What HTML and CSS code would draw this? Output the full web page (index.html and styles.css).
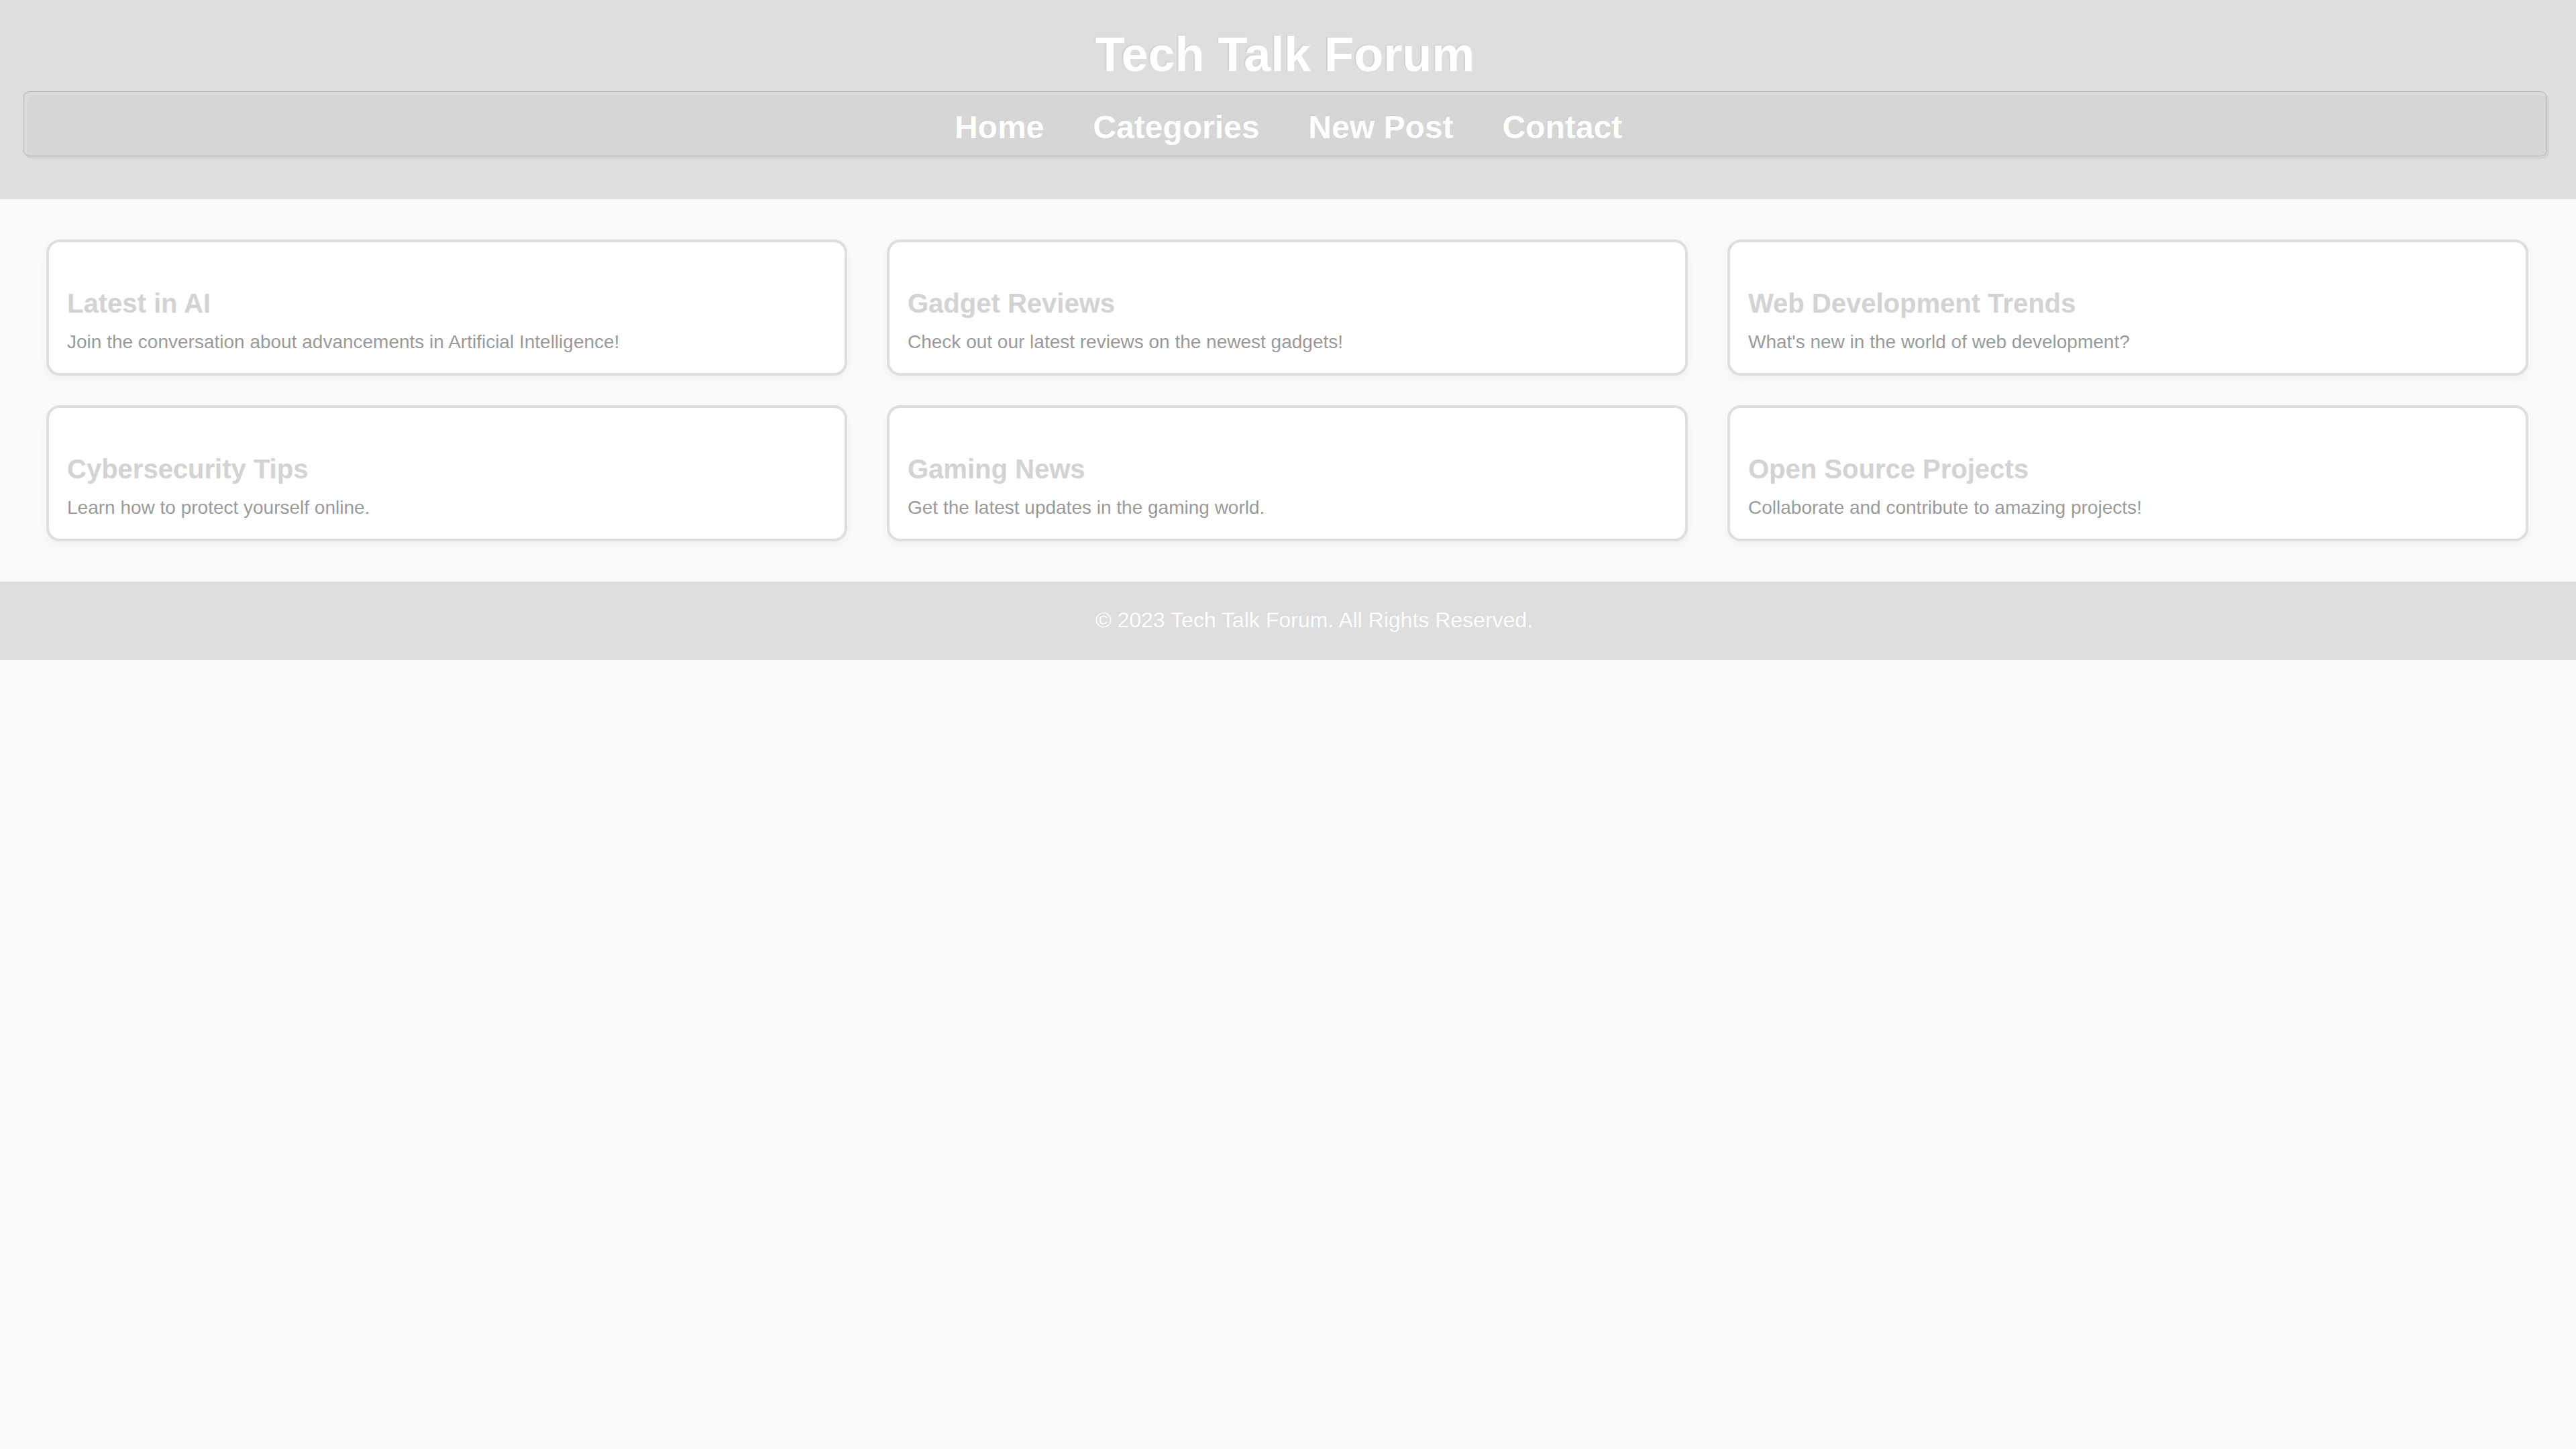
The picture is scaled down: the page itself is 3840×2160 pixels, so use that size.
FILE: index.html
```html
<!DOCTYPE html>
<html lang="en">
<head>
<meta charset="utf-8">
<title>Tech Talk Forum</title>
<link rel="stylesheet" href="styles.css">
</head>
<body>
<header class="site-header">
  <h1 class="site-title">Tech Talk Forum</h1>
  <nav class="main-nav">
    <a class="nav-link" href="#">Home</a>
    <a class="nav-link" href="#">Categories</a>
    <a class="nav-link" href="#">New Post</a>
    <a class="nav-link" href="#">Contact</a>
  </nav>
</header>
<main class="topics">
  <section class="topic-card">
    <h2 class="topic-title">Latest in AI</h2>
    <p class="topic-desc">Join the conversation about advancements in Artificial Intelligence!</p>
  </section>
  <section class="topic-card">
    <h2 class="topic-title">Gadget Reviews</h2>
    <p class="topic-desc">Check out our latest reviews on the newest gadgets!</p>
  </section>
  <section class="topic-card">
    <h2 class="topic-title">Web Development Trends</h2>
    <p class="topic-desc">What's new in the world of web development?</p>
  </section>
  <section class="topic-card">
    <h2 class="topic-title">Cybersecurity Tips</h2>
    <p class="topic-desc">Learn how to protect yourself online.</p>
  </section>
  <section class="topic-card">
    <h2 class="topic-title">Gaming News</h2>
    <p class="topic-desc">Get the latest updates in the gaming world.</p>
  </section>
  <section class="topic-card">
    <h2 class="topic-title">Open Source Projects</h2>
    <p class="topic-desc">Collaborate and contribute to amazing projects!</p>
  </section>
</main>
<footer class="site-footer">
  <p class="footer-text">&copy; 2023 Tech Talk Forum. All Rights Reserved.</p>
</footer>
</body>
</html>
```
FILE: styles.css
```css
html, body {
  margin: 0;
  padding: 0;
}

body {
  background: #fafafa;
  font-family: "Liberation Sans", Arial, sans-serif;
  min-height: 2160px;
}

.site-header {
  background: #dedede;
  padding: 40px 43px 64px 34px;
  display: flex;
  flex-direction: column;
}

.site-title {
  margin: 0 0 13px 0;
  font-size: 72px;
  font-weight: bold;
  line-height: 83px;
  color: #ffffff;
  text-align: center;
  text-shadow: -2px -1px 0 rgba(0, 0, 0, 0.06);
}

.main-nav {
  display: flex;
  justify-content: center;
  gap: 73px;
  padding: 25px 0 15px 10px;
  background: #d6d6d6;
  border: 1px solid #b4b4b4;
  border-radius: 10px;
  box-shadow: inset 5px 5px 0 #dbdbdb, 3px 4px 0 #d2d2d2;
}

.nav-link {
  font-size: 48px;
  font-weight: bold;
  line-height: 55px;
  color: #ffffff;
  text-decoration: none;
  text-shadow: -1px -1px 0 rgba(0, 0, 0, 0.06);
}

.topics {
  display: grid;
  grid-template-columns: repeat(3, 1fr);
  gap: 44px 59px;
  padding: 60px 71px 60px 69px;
}

.topic-card {
  background: #ffffff;
  border: 4px solid #dedede;
  border-radius: 20px;
  padding: 68px 27px 30px 27px;
  box-shadow: 0 6px 16px rgba(0, 0, 0, 0.04);
}

.topic-title {
  margin: 0 0 19px 0;
  font-size: 40px;
  font-weight: bold;
  line-height: 46px;
  color: #d3d3d3;
  text-shadow: 1px 1px 0 rgba(0, 0, 0, 0.04);
}

.topic-desc {
  margin: 0;
  font-size: 28px;
  line-height: 32px;
  color: #9a9a9a;
}

.site-footer {
  background: #dedede;
  padding: 39px 0 41px 78px;
}

.footer-text {
  margin: 0;
  font-size: 32px;
  line-height: 37px;
  color: #ffffff;
  text-align: center;
  text-shadow: -1px -1px 0 rgba(0, 0, 0, 0.06);
}
```
